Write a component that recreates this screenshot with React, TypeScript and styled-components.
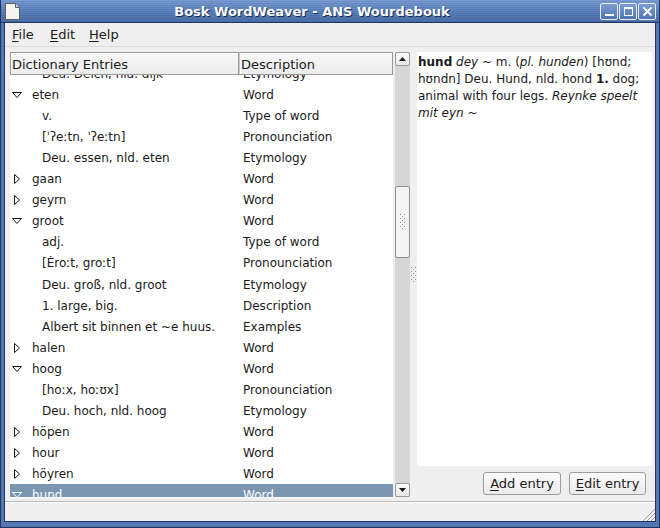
import React from "react";
import styled, { createGlobalStyle } from "styled-components";

const GlobalStyle = createGlobalStyle`
  html, body {
    margin: 0;
    padding: 0;
    background: #ffffff;
  }
  body {
    font-family: "DejaVu Sans", "Liberation Sans", sans-serif;
    font-size: 12px;
    color: #1a1a1a;
  }
`;

const Window = styled.div`
  width: 660px;
  height: 528px;
  box-sizing: border-box;
  display: flex;
  flex-direction: column;
  background: #5377b3;
  border: 1px solid #1d3360;
  border-top: none;
  overflow: hidden;
`;

const TitleBar = styled.div`
  height: 22px;
  flex: none;
  display: flex;
  align-items: center;
  padding: 0 3px 0 4px;
  background: repeating-linear-gradient(
      to bottom,
      rgba(255, 255, 255, 0.1) 0px,
      rgba(255, 255, 255, 0.1) 1px,
      rgba(0, 0, 0, 0) 1px,
      rgba(0, 0, 0, 0) 2px
    ),
    linear-gradient(to bottom, #6d92cc, #4c71b0 60%, #41659f);
  border-bottom: 1px solid #203766;
`;

const TitleText = styled.div`
  flex: 1;
  text-align: center;
  color: #ffffff;
  font-weight: bold;
  font-size: 13px;
  text-shadow: 1px 1px 0 #1b2f58;
  padding-left: 4px;
`;

const TitleButtons = styled.div`
  display: flex;
  gap: 1px;
`;

const TitleButton = styled.div`
  width: 18px;
  height: 17px;
  box-sizing: border-box;
  border: 1px solid #e8eef8;
  border-radius: 2px;
  background: linear-gradient(to bottom, #7c9dd2, #4f74b2);
  display: flex;
  align-items: center;
  justify-content: center;
`;

const Frame = styled.div`
  flex: 1;
  display: flex;
  flex-direction: column;
  margin: 0 3px 5px 3px;
  background: #efefef;
  border: 1px solid #1f3666;
  border-top: none;
  min-height: 0;
`;

const MenuBar = styled.div`
  height: 23px;
  flex: none;
  display: flex;
  align-items: center;
  padding-left: 7px;
  font-size: 13px;
  border-bottom: 1px solid #dcdcdc;
`;

const MenuItem = styled.span<{ $w?: number }>`
  width: ${(p) => (p.$w ? `${p.$w}px` : "auto")};
  u {
    text-decoration: underline;
    text-underline-offset: 2px;
  }
`;

const Content = styled.div`
  flex: 1;
  display: flex;
  padding: 5px 3px 3px 5px;
  min-height: 0;
`;

const TreePane = styled.div`
  width: 400px;
  flex: none;
  display: flex;
  gap: 2px;
`;

const Tree = styled.div`
  flex: 1;
  display: flex;
  flex-direction: column;
  background: #ffffff;
  border-bottom: 1px solid #ffffff;
  min-height: 0;
`;

const HeaderRow = styled.div`
  display: grid;
  grid-template-columns: 229px 1fr;
  height: 23px;
  flex: none;
  position: relative;
  z-index: 1;
`;

const HeaderCell = styled.div<{ $first?: boolean }>`
  box-sizing: border-box;
  border: 1px solid #9a9a9a;
  border-left-color: ${(p) => (p.$first ? "#9a9a9a" : "#c8c8c8")};
  background: linear-gradient(to bottom, #f8f8f8, #ececec);
  display: flex;
  align-items: center;
  padding: 2px 0 0 1px;
  font-size: 13px;
  box-shadow: inset 1px 1px 0 #ffffff;
`;

const Rows = styled.div`
  flex: 1;
  overflow: hidden;
  min-height: 0;
`;

const RowList = styled.div`
  margin-top: -12px;
`;

const Row = styled.div<{ $selected?: boolean; $tall?: boolean }>`
  display: grid;
  grid-template-columns: 229px 1fr;
  height: ${(p) => (p.$tall ? "22px" : "21px")};
  align-items: center;
  font-size: 12px;
  background: ${(p) => (p.$selected ? "#7a96b0" : "transparent")};
  color: ${(p) => (p.$selected ? "#ffffff" : "#1a1a1a")};
`;

const NameCell = styled.div<{ $child?: boolean }>`
  display: flex;
  align-items: center;
  padding-left: ${(p) => (p.$child ? "32px" : "2px")};
  white-space: nowrap;
  overflow: hidden;
`;

const Expander = styled.span`
  width: 20px;
  flex: none;
  display: flex;
  align-items: center;
`;

const DescCell = styled.div`
  padding-left: 4px;
  white-space: nowrap;
`;

const ScrollBar = styled.div`
  width: 15px;
  flex: none;
  display: flex;
  flex-direction: column;
  background: #d6d6d6;
  border-bottom: 1px solid #efefef;
`;

const ArrowButton = styled.div`
  height: 14px;
  box-sizing: border-box;
  border: 1px solid #9a9a9a;
  border-radius: 2px;
  background: linear-gradient(to bottom, #fbfbfb, #e8e8e8);
  display: flex;
  align-items: center;
  justify-content: center;
  flex: none;
`;

const Trough = styled.div`
  flex: 1;
  display: flex;
  flex-direction: column;
  padding-top: 120px;
`;

const Thumb = styled.div`
  height: 72px;
  box-sizing: border-box;
  border: 1px solid #8e8e8e;
  border-radius: 2px;
  background: #f4f4f4;
  display: flex;
  align-items: center;
  justify-content: center;
`;

const Handle = styled.div`
  width: 7px;
  flex: none;
  display: flex;
  align-items: center;
  justify-content: center;
`;

const DetailPane = styled.div`
  flex: 1;
  display: flex;
  flex-direction: column;
  gap: 6px;
  min-width: 0;
`;

const Detail = styled.div`
  flex: 1;
  background: #ffffff;
  padding: 2px 8px 0 1px;
  font-size: 12px;
  line-height: 17px;
  color: #1a1a1a;
`;

const ButtonRow = styled.div`
  display: flex;
  justify-content: flex-end;
  gap: 8px;
  padding: 0 6px 3px 0;
`;

const Button = styled.div<{ $w: number }>`
  width: ${(p) => p.$w}px;
  height: 23px;
  box-sizing: border-box;
  border: 1px solid #9c9c9c;
  border-radius: 3px;
  background: linear-gradient(to bottom, #fcfcfc, #ebebeb);
  display: flex;
  align-items: center;
  justify-content: center;
  font-size: 13px;
  color: #1a1a1a;
  u {
    text-underline-offset: 2px;
  }
`;

const StatusBar = styled.div`
  height: 19px;
  flex: none;
  border-top: 1px solid #b8b8b8;
  box-shadow: inset 0 1px 0 #ffffff;
  display: flex;
  justify-content: flex-end;
  align-items: flex-end;
`;

type Entry = {
  name: string;
  desc: string;
  child?: boolean;
  open?: boolean;
  selected?: boolean;
  tall?: boolean;
};

const entries: Entry[] = [
  { name: "Deu. Deich, nld. dijk", desc: "Etymology", child: true },
  { name: "eten", desc: "Word", open: true },
  { name: "v.", desc: "Type of word", child: true },
  { name: "[\u02C8\u0294e\u02D0tn, \u02C8\u0294e\u02D0tn]", desc: "Pronounciation", child: true },
  { name: "Deu. essen, nld. eten", desc: "Etymology", child: true },
  { name: "gaan", desc: "Word" },
  { name: "geyrn", desc: "Word" },
  { name: "groot", desc: "Word", open: true },
  { name: "adj.", desc: "Type of word", child: true },
  { name: "[\u0116ro\u02D0t, gro\u02D0t]", desc: "Pronounciation", child: true, tall: true },
  { name: "Deu. gro\u00DF, nld. groot", desc: "Etymology", child: true },
  { name: "1. large, big.", desc: "Description", child: true },
  { name: "Albert sit binnen et ~e huus.", desc: "Examples", child: true },
  { name: "halen", desc: "Word" },
  { name: "hoog", desc: "Word", open: true },
  { name: "[ho\u02D0x, ho\u02D0\u028Ax]", desc: "Pronounciation", child: true },
  { name: "Deu. hoch, nld. hoog", desc: "Etymology", child: true },
  { name: "h\u00F6pen", desc: "Word" },
  { name: "hour", desc: "Word" },
  { name: "h\u00F6yren", desc: "Word" },
  { name: "hund", desc: "Word", open: true, selected: true },
];

const Triangle = ({ open, light }: { open?: boolean; light?: boolean }) => (
  <svg width="10" height="10" viewBox="0 0 10 10">
    {open ? (
      <path d="M0.5 2.5 L9.5 2.5 L5 7.5 Z" fill="none" stroke={light ? "#fff" : "#1a1a1a"} strokeWidth="1" />
    ) : (
      <path d="M2.5 0.5 L7.5 5 L2.5 9.5 Z" fill="none" stroke="#1a1a1a" strokeWidth="1" />
    )}
  </svg>
);

const Grip = () => (
  <svg width="6" height="16" viewBox="0 0 6 16">
    {[0, 1, 2, 3, 4, 5, 6, 7].map((r) =>
      [0, 1, 2].map((c) =>
        (r + c) % 2 === 0 ? (
          <rect key={`${r}-${c}`} x={c * 2} y={r * 2} width="1" height="1" fill="#8c8c8c" />
        ) : null,
      ),
    )}
  </svg>
);

const ResizeGrip = () => (
  <svg width="14" height="14" viewBox="0 0 14 14">
    {[4, 8, 12].map((o) => (
      <line key={o} x1={14 - o} y1="14" x2="14" y2={14 - o} stroke="#a0a0a0" strokeWidth="1" />
    ))}
  </svg>
);

const DocIcon = () => (
  <svg width="15" height="17" viewBox="0 0 15 17">
    <path d="M0.5 0.5 H10.5 L14.5 4.5 V16.5 H0.5 Z" fill="#f4f4f0" stroke="#5d5d5d" />
    <path d="M10.5 0.5 V4.5 H14.5" fill="#d8d8d0" stroke="#5d5d5d" />
  </svg>
);

const App = () => {
  return (
    <>
      <GlobalStyle />
      <Window>
        <TitleBar>
          <DocIcon />
          <TitleText>Bosk WordWeaver - ANS Wourdebouk</TitleText>
          <TitleButtons>
            <TitleButton>
              <svg width="11" height="11" viewBox="0 0 11 11">
                <rect x="1" y="8" width="9" height="2" fill="#fff" />
              </svg>
            </TitleButton>
            <TitleButton>
              <svg width="11" height="11" viewBox="0 0 11 11">
                <rect x="1.5" y="1.5" width="8" height="8" fill="none" stroke="#fff" />
                <rect x="1" y="1" width="9" height="2" fill="#fff" />
              </svg>
            </TitleButton>
            <TitleButton>
              <svg width="11" height="11" viewBox="0 0 11 11">
                <path d="M1.5 1.5 L9.5 9.5 M9.5 1.5 L1.5 9.5" stroke="#fff" strokeWidth="1.8" />
              </svg>
            </TitleButton>
          </TitleButtons>
        </TitleBar>
        <Frame>
          <MenuBar>
            <MenuItem $w={38}>
              <u>F</u>ile
            </MenuItem>
            <MenuItem $w={39}>
              <u>E</u>dit
            </MenuItem>
            <MenuItem>
              <u>H</u>elp
            </MenuItem>
          </MenuBar>
          <Content>
            <TreePane>
              <Tree>
                <HeaderRow>
                  <HeaderCell $first>Dictionary Entries</HeaderCell>
                  <HeaderCell>Description</HeaderCell>
                </HeaderRow>
                <Rows>
                  <RowList>
                    {entries.map((e, i) => (
                      <Row key={i} $selected={e.selected} $tall={e.tall}>
                        <NameCell $child={e.child}>
                          {!e.child && (
                            <Expander>
                              <Triangle open={e.open} light={e.selected} />
                            </Expander>
                          )}
                          {e.name}
                        </NameCell>
                        <DescCell>{e.desc}</DescCell>
                      </Row>
                    ))}
                  </RowList>
                </Rows>
              </Tree>
              <ScrollBar>
                <ArrowButton>
                  <svg width="7" height="4" viewBox="0 0 7 4">
                    <path d="M0 4 L3.5 0 L7 4 Z" fill="#1a1a1a" />
                  </svg>
                </ArrowButton>
                <Trough>
                  <Thumb>
                    <Grip />
                  </Thumb>
                </Trough>
                <ArrowButton>
                  <svg width="7" height="4" viewBox="0 0 7 4">
                    <path d="M0 0 L3.5 4 L7 0 Z" fill="#1a1a1a" />
                  </svg>
                </ArrowButton>
              </ScrollBar>
            </TreePane>
            <Handle>
              <Grip />
            </Handle>
            <DetailPane>
              <Detail>
                <b>hund</b> <i>dey</i> ~ m. (<i>pl. hunden</i>) [h{"\u028A"}nd; h{"\u028A"}ndn] Deu. Hund, nld.
                hond <b>1.</b> dog; animal with four legs. <i>Reynke speelt mit eyn ~</i>
              </Detail>
              <ButtonRow>
                <Button $w={78}>
                  <span>
                    <u>A</u>dd entry
                  </span>
                </Button>
                <Button $w={77}>
                  <span>
                    <u>E</u>dit entry
                  </span>
                </Button>
              </ButtonRow>
            </DetailPane>
          </Content>
          <StatusBar>
            <ResizeGrip />
          </StatusBar>
        </Frame>
      </Window>
    </>
  );
};

export default App;
